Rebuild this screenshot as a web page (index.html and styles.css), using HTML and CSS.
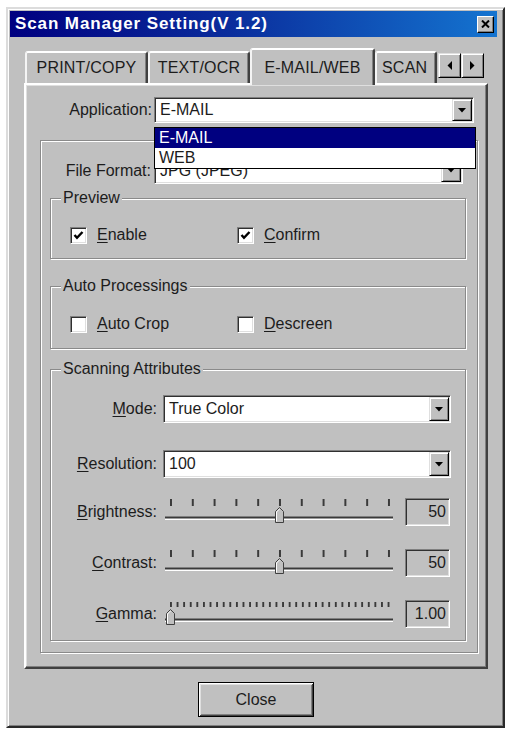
FILE: index.html
```html
<!DOCTYPE html>
<html lang="en">
<head>
<meta charset="utf-8">
<title>Scan Manager Setting</title>
<link rel="stylesheet" href="styles.css">
</head>
<body>
<div class="window">
  <div class="titlebar">
    <span class="title">Scan Manager Setting(V 1.2)</span>
    <span class="tb-close"><svg width="9" height="8" viewBox="0 0 9 8"><path d="M1 0.5 L8 7.5 M8 0.5 L1 7.5" stroke="#000" stroke-width="2"/></svg></span>
  </div>
  <div class="client">
    <div class="tabstrip">
      <div class="tab t1">PRINT/COPY</div>
      <div class="tab t2">TEXT/OCR</div>
      <div class="tab t3 active">E-MAIL/WEB</div>
      <div class="tab t4">SCAN</div>
      <div class="tab-arrows">
        <span class="arrow-btn"><svg width="5" height="9" viewBox="0 0 5 9"><path d="M5 0 L5 9 L0.5 4.5 Z" fill="#000"/></svg></span>
        <span class="arrow-btn"><svg width="5" height="9" viewBox="0 0 5 9"><path d="M0 0 L0 9 L4.5 4.5 Z" fill="#000"/></svg></span>
      </div>
    </div>
    <div class="panel">
      <div class="app-row">
        <span class="app-label">Application:</span>
        <div class="combo-wrap">
          <div class="combo app-combo">
            <span class="combo-text">E-MAIL</span>
            <span class="combo-btn"><svg width="8" height="5" viewBox="0 0 8 5"><path d="M0 0 H8 L4 4.5 Z" fill="#000"/></svg></span>
          </div>
          <ul class="dropdown">
            <li class="sel">E-MAIL</li>
            <li>WEB</li>
          </ul>
        </div>
      </div>

      <div class="outer-group">
        <div class="file-row">
          <span class="file-label">File Format:</span>
          <div class="combo file-combo">
            <span class="combo-text">JPG (JPEG)</span>
            <span class="combo-btn"><svg width="8" height="5" viewBox="0 0 8 5"><path d="M0 0 H8 L4 4.5 Z" fill="#000"/></svg></span>
          </div>
        </div>

        <div class="group preview">
          <div class="group-title">Preview</div>
          <div class="check-row">
            <div class="check"><span class="box"><svg width="13" height="13" viewBox="0 0 13 13"><path d="M2.5 6 L5 8.8 L10.5 3" fill="none" stroke="#000" stroke-width="2.4"/></svg></span><span><u>E</u>nable</span></div>
            <div class="check"><span class="box"><svg width="13" height="13" viewBox="0 0 13 13"><path d="M2.5 6 L5 8.8 L10.5 3" fill="none" stroke="#000" stroke-width="2.4"/></svg></span><span><u>C</u>onfirm</span></div>
          </div>
        </div>

        <div class="group auto">
          <div class="group-title">Auto Processings</div>
          <div class="check-row">
            <div class="check"><span class="box"></span><span><u>A</u>uto Crop</span></div>
            <div class="check"><span class="box"></span><span><u>D</u>escreen</span></div>
          </div>
        </div>

        <div class="group scanning">
          <div class="group-title">Scanning Attributes</div>
          <div class="field-row mode-row">
            <span class="field-label"><u>M</u>ode:</span>
            <div class="combo attr-combo">
              <span class="combo-text">True Color</span>
              <span class="combo-btn"><svg width="8" height="5" viewBox="0 0 8 5"><path d="M0 0 H8 L4 4.5 Z" fill="#000"/></svg></span>
            </div>
          </div>
          <div class="field-row res-row">
            <span class="field-label"><u>R</u>esolution:</span>
            <div class="combo attr-combo">
              <span class="combo-text">100</span>
              <span class="combo-btn"><svg width="8" height="5" viewBox="0 0 8 5"><path d="M0 0 H8 L4 4.5 Z" fill="#000"/></svg></span>
            </div>
          </div>
          <div class="field-row slider-row bright-row">
            <span class="field-label"><u>B</u>rightness:</span>
            <div class="slider">
              <div class="ticks"></div>
              <div class="track"></div>
              <span class="thumb" style="left:116px"><svg width="9" height="16" viewBox="0 0 9 16"><path d="M0.5 15.5 V4.5 L4.5 0.5 L8.5 4.5 V15.5 Z" fill="#c0c0c0" stroke="#404040" stroke-width="1"/><path d="M1.5 14.5 V5 L4.5 2" fill="none" stroke="#fff" stroke-width="1"/></svg></span>
            </div>
            <span class="valbox">50</span>
          </div>
          <div class="field-row slider-row contrast-row">
            <span class="field-label"><u>C</u>ontrast:</span>
            <div class="slider">
              <div class="ticks"></div>
              <div class="track"></div>
              <span class="thumb" style="left:116px"><svg width="9" height="16" viewBox="0 0 9 16"><path d="M0.5 15.5 V4.5 L4.5 0.5 L8.5 4.5 V15.5 Z" fill="#c0c0c0" stroke="#404040" stroke-width="1"/><path d="M1.5 14.5 V5 L4.5 2" fill="none" stroke="#fff" stroke-width="1"/></svg></span>
            </div>
            <span class="valbox">50</span>
          </div>
          <div class="field-row slider-row gamma-row">
            <span class="field-label"><u>G</u>amma:</span>
            <div class="slider">
              <div class="ticks dense"></div>
              <div class="track"></div>
              <span class="thumb" style="left:7px"><svg width="9" height="16" viewBox="0 0 9 16"><path d="M0.5 15.5 V4.5 L4.5 0.5 L8.5 4.5 V15.5 Z" fill="#c0c0c0" stroke="#404040" stroke-width="1"/><path d="M1.5 14.5 V5 L4.5 2" fill="none" stroke="#fff" stroke-width="1"/></svg></span>
            </div>
            <span class="valbox">1.00</span>
          </div>
        </div>
      </div>
    </div>
    <div class="footer">
      <button class="btn" type="button">Close</button>
    </div>
  </div>
</div>
</body>
</html>
```

FILE: styles.css
```css
* { box-sizing: border-box; }
html, body { margin: 0; background: #fff; }
body {
  font-family: "Liberation Sans", Arial, sans-serif;
  font-size: 16px;
  line-height: 18px;
  color: #1c1c1c;
}
u { text-decoration: underline; text-underline-offset: 2px; }

.window {
  margin: 7px 0 0 6px;
  width: 499px;
  height: 721px;
  background: #c0c0c0;
  border: 2px solid;
  border-color: #dcdcdc #2a2a2a #2a2a2a #dcdcdc;
  box-shadow: inset 1px 1px #fff, inset -1px -1px #808080;
  padding: 2px 6px 2px 2px;
  display: flex;
  flex-direction: column;
}

.titlebar {
  height: 26px;
  flex: none;
  background: linear-gradient(90deg, #000080 0%, #0a2d9c 45%, #1474d0 100%);
  display: flex;
  align-items: center;
  justify-content: space-between;
  padding: 0 3px 0 5px;
}
.title {
  color: #fff;
  font-weight: bold;
  font-size: 17px;
  letter-spacing: 0.9px;
  white-space: nowrap;
}
.tb-close {
  width: 17px;
  height: 17px;
  background: #c0c0c0;
  border: 1px solid;
  border-color: #fff #000 #000 #fff;
  box-shadow: inset -1px -1px #808080;
  display: flex;
  align-items: center;
  justify-content: center;
}

.client {
  padding: 11px 9px 0 14px;
  display: flex;
  flex-direction: column;
}

/* Tabs */
.tabstrip {
  display: flex;
  align-items: flex-end;
  height: 35px;
  padding-left: 1px;
}
.tab {
  height: 32px;
  display: flex;
  align-items: center;
  justify-content: center;
  border: 2px solid;
  border-bottom: 0;
  border-color: #fff #404040 transparent #f4f4f4;
  border-radius: 3px 3px 0 0;
  box-shadow: inset -1px 0 #808080;
  white-space: nowrap;
  letter-spacing: 0.2px;
  background: #c0c0c0;
}
.t1 { width: 123px; }
.t2 { width: 102px; }
.t3 { width: 125px; }
.t4 { width: 62px; justify-content: flex-start; padding-left: 5px; overflow: hidden; }
.tab.active {
  height: 37px;
  margin-bottom: -2px;
  position: relative;
  z-index: 2;
}
.tab-arrows {
  align-self: flex-start;
  margin-top: 5px;
  margin-left: 1px;
  display: flex;
}
.arrow-btn {
  width: 23px;
  height: 25px;
  background: #c0c0c0;
  border: 1px solid;
  border-color: #dfdfdf #000 #000 #dfdfdf;
  box-shadow: inset 1px 1px #fff, inset -1px -1px #808080;
  display: flex;
  align-items: center;
  justify-content: center;
}

/* Panel */
.panel {
  height: 586px;
  border: 2px solid;
  border-color: #fff #404040 #404040 #fff;
  box-shadow: inset -1px -1px #808080, inset 1px 1px #dfdfdf;
  padding-top: 12px;
  position: relative;
  z-index: 1;
}
.app-row {
  display: flex;
  align-items: center;
  height: 26px;
}
.app-label {
  width: 126px;
  margin-right: 2px;
  text-align: right;
}
.combo-wrap {
  position: relative;
  width: 320px;
  height: 26px;
}

.combo {
  display: flex;
  align-items: stretch;
  height: 26px;
  background: #fff;
  border: 1px solid;
  border-color: #808080 #fff #fff #808080;
  box-shadow: inset 1px 1px #303030, inset -1px -1px #dfdfdf;
  padding: 1px;
}
.combo-text {
  flex: 1;
  padding-left: 4px;
  display: flex;
  align-items: center;
  white-space: nowrap;
  overflow: hidden;
}
.combo-btn {
  width: 20px;
  flex: none;
  background: #c0c0c0;
  border: 1px solid;
  border-color: #dfdfdf #000 #000 #dfdfdf;
  box-shadow: inset 1px 1px #fff, inset -1px -1px #808080;
  display: flex;
  align-items: center;
  justify-content: center;
}

.dropdown {
  position: absolute;
  top: 30px;
  left: 0;
  right: -2px;
  margin: 0;
  padding: 0;
  list-style: none;
  background: #fff;
  border: 1px solid #000;
  z-index: 10;
}
.dropdown li {
  height: 20px;
  line-height: 20px;
  padding-left: 4px;
}
.dropdown li.sel {
  background: #000080;
  color: #fff;
}

/* Groups */
.outer-group {
  margin: 17px 8px 0 14px;
  border: 1px solid #8a8a8a;
  box-shadow: inset 1px 1px #fff, 1px 1px #fff;
  padding: 16px 11px 11px 9px;
}
.file-row {
  display: flex;
  align-items: center;
  height: 27px;
}
.file-label {
  width: 101px;
  margin-right: 3px;
  text-align: right;
}
.file-combo {
  width: 309px;
  height: 27px;
}

.group {
  border: 1px solid #8a8a8a;
  box-shadow: inset 1px 1px #fff, 1px 1px #fff;
}
.group-title {
  margin: -10px 0 0 10px;
  padding: 0 2px;
  width: fit-content;
  background: #c0c0c0;
  line-height: 18px;
  white-space: nowrap;
}
.preview { margin-top: 14px; padding-bottom: 14px; }
.preview .check-row { margin-top: 19px; }
.auto { margin-top: 27px; padding-bottom: 15px; }
.auto .check-row { margin-top: 20px; }
.scanning { margin-top: 20px; padding-bottom: 12px; }

.check-row {
  display: grid;
  grid-template-columns: 167px auto;
  height: 18px;
  padding-left: 19px;
}
.check {
  display: flex;
  align-items: center;
  gap: 10px;
}
.box {
  width: 17px;
  height: 17px;
  background: #fff;
  border: 1px solid;
  border-color: #808080 #fff #fff #808080;
  box-shadow: inset 1px 1px #303030, inset -1px -1px #dfdfdf;
  display: flex;
  align-items: center;
  justify-content: center;
}

/* Scanning attribute rows */
.field-row {
  display: flex;
  align-items: center;
  height: 28px;
}
.field-label {
  width: 106px;
  margin-right: 6px;
  text-align: right;
  white-space: nowrap;
}
.attr-combo {
  width: 288px;
  height: 28px;
}
.mode-row { margin-top: 17px; }
.res-row { margin-top: 27px; }
.bright-row { margin-top: 20px; }
.contrast-row, .gamma-row { margin-top: 23px; }

.slider {
  position: relative;
  width: 232px;
  height: 28px;
  margin-right: 10px;
  align-self: stretch;
}
.ticks {
  margin: 1px 0 0 7px;
  width: 220px;
  height: 7px;
  background: linear-gradient(90deg, #3a3a3a 0 2px, transparent 2px) 0 0 / 21.8px 100% repeat-x;
}
.ticks.dense {
  background: linear-gradient(90deg, #3a3a3a 0 2px, transparent 2px) 0 1px / 6.606px 5px repeat-x;
}
.track {
  margin: 10px 0 0 2px;
  width: 228px;
  height: 4px;
  background: linear-gradient(180deg, #808080 0 1px, #3a3a3a 1px 2px, #9a9a9a 2px 3px, #fff 3px 4px);
}
.thumb {
  position: absolute;
  top: 9px;
  width: 9px;
  height: 16px;
  margin-left: -4px;
  display: block;
}
.thumb svg { display: block; }
.valbox {
  width: 45px;
  height: 28px;
  border: 1px solid;
  border-color: #808080 #fff #fff #808080;
  box-shadow: inset 1px 1px #303030, inset -1px -1px #dfdfdf;
  background: #c0c0c0;
  text-align: right;
  padding-right: 3px;
  line-height: 26px;
}

/* Footer */
.footer {
  display: flex;
  justify-content: center;
  margin-top: 13px;
}
.btn {
  width: 116px;
  height: 35px;
  font-family: "Liberation Sans", Arial, sans-serif;
  font-size: 16px;
  color: #1c1c1c;
  background: #c0c0c0;
  border: 1px solid #000;
  box-shadow: inset 1px 1px #fff, inset -1px -1px #404040, inset 2px 2px #dfdfdf, inset -2px -2px #808080;
  padding: 0;
  margin: 0;
}
```
